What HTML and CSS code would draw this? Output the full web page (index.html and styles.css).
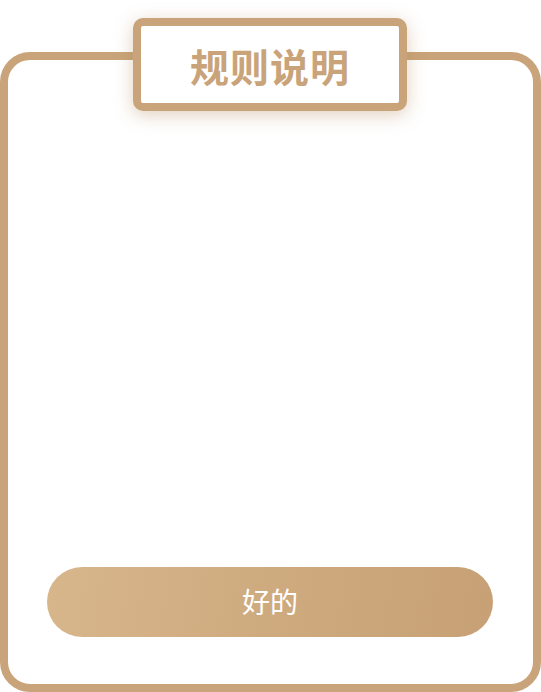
FILE: index.html
```html
<!DOCTYPE html>
<html lang="zh">
<head>
<meta charset="utf-8">
<link rel="stylesheet" href="styles.css">
</head>
<body>
<div class="page">
  <div class="card">
    <div class="card-body"></div>
    <button class="btn">好的</button>
  </div>
  <div class="title">规则说明</div>
</div>
</body>
</html>
```
FILE: styles.css
```css
html, body {
  margin: 0;
  padding: 0;
  background: #ffffff;
}
body {
  font-family: "Noto Sans CJK SC", "Noto Sans", sans-serif;
}
.page {
  position: relative;
  width: 541px;
  height: 692px;
  padding-top: 52px;
  box-sizing: border-box;
}
.card {
  height: 640px;
  box-sizing: border-box;
  border: 8px solid #c9a47a;
  border-radius: 30px;
  background: #fff;
  display: flex;
  flex-direction: column;
  padding: 0 40px 47px 39px;
}
.card-body {
  flex: 1;
}
.btn {
  height: 70px;
  border: none;
  border-radius: 35px;
  background: linear-gradient(100deg, #d8b68c 0%, #cfab80 45%, #c7a175 100%);
  color: #ffffff;
  font-family: "Noto Sans CJK SC", sans-serif;
  font-size: 28px;
  font-weight: 400;
  padding: 0;
  padding-bottom: 2px;
}
.title {
  position: absolute;
  left: 133px;
  top: 18px;
  width: 274px;
  height: 93px;
  box-sizing: border-box;
  border: 8px solid #c9a47a;
  border-radius: 10px;
  background: #fff;
  box-shadow: 0 4px 18px rgba(170, 120, 70, 0.35);
  color: #c9a47a;
  font-size: 39px;
  font-weight: 700;
  display: flex;
  align-items: center;
  justify-content: center;
  letter-spacing: 1px;
}
```
